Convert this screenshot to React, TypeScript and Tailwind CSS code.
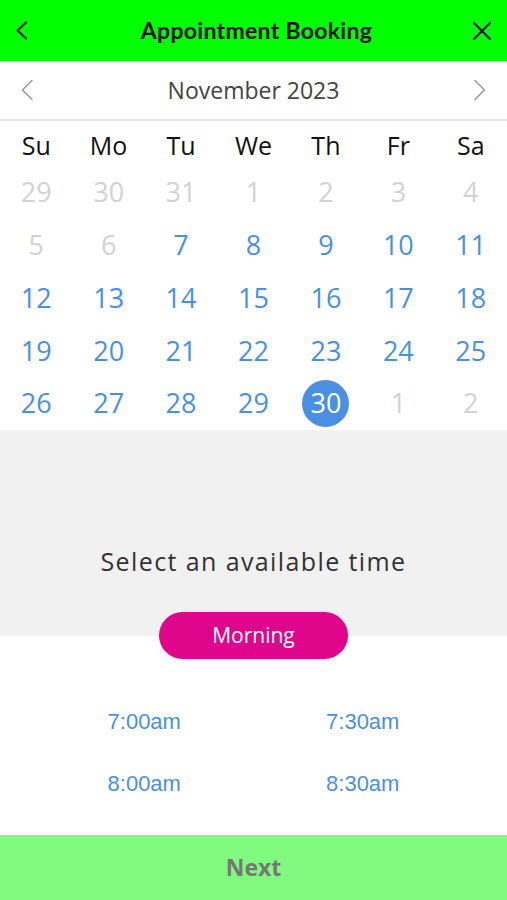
import React from "react";

const weekdays = ["Su", "Mo", "Tu", "We", "Th", "Fr", "Sa"];

const days: { n: number; muted?: boolean; selected?: boolean }[] = [
  { n: 29, muted: true },
  { n: 30, muted: true },
  { n: 31, muted: true },
  { n: 1, muted: true },
  { n: 2, muted: true },
  { n: 3, muted: true },
  { n: 4, muted: true },
  { n: 5, muted: true },
  { n: 6, muted: true },
  ...Array.from({ length: 23 }, (_, i) => ({ n: i + 7 })),
  { n: 30, selected: true },
  { n: 1, muted: true },
  { n: 2, muted: true },
];

const times = ["7:00am", "7:30am", "8:00am", "8:30am"];

export default function App() {
  return (
    <div className="flex h-screen flex-col bg-white font-['Open_Sans',sans-serif]">
      {/* Header */}
      <header className="flex h-[61px] items-center justify-between bg-[#00ff00] px-[15px]">
        <div className="flex w-[22px] justify-start">
          <svg width="13" height="19" viewBox="0 0 13 19" fill="none">
            <path d="M11 1.5 L2.5 9.5 L11 17.5" stroke="#111" strokeWidth="2" strokeLinecap="round" strokeLinejoin="round" />
          </svg>
        </div>
        <h1 className="pl-[6px] font-['Lato',sans-serif] text-[23px] font-bold tracking-[0.3px] text-[#111]">
          Appointment Booking
        </h1>
        <div className="flex w-[22px] justify-end">
          <svg width="20" height="20" viewBox="0 0 20 20" fill="none">
            <path d="M2 2 L18 18 M18 2 L2 18" stroke="#111" strokeWidth="2.2" strokeLinecap="round" />
          </svg>
        </div>
      </header>

      {/* Month */}
      <div className="flex h-[60px] items-center justify-between border-b-2 border-[#e8e8e8] px-[20px]">
        <svg width="14" height="22" viewBox="0 0 14 22" fill="none">
          <path d="M12 1.5 L2.5 11 L12 20.5" stroke="#9a9a9a" strokeWidth="1.6" strokeLinecap="round" strokeLinejoin="round" />
        </svg>
        <span className="text-[23px] text-[#444]">November 2023</span>
        <svg width="14" height="22" viewBox="0 0 14 22" fill="none">
          <path d="M2 1.5 L11.5 11 L2 20.5" stroke="#9a9a9a" strokeWidth="1.6" strokeLinecap="round" strokeLinejoin="round" />
        </svg>
      </div>

      {/* Calendar */}
      <div className="grid grid-cols-7">
        {weekdays.map((w) => (
          <div key={w} className="flex h-[45px] items-center justify-center pt-1 text-[25px] text-[#111]">
            {w}
          </div>
        ))}
        {days.map((d, i) => (
          <div key={i} className="flex h-[52.8px] items-center justify-center">
            {d.selected ? (
              <span className="flex h-[47px] w-[47px] items-center justify-center rounded-full bg-[#4a90e2] text-[27px] text-white">
                {d.n}
              </span>
            ) : (
              <span className={`text-[27px] ${d.muted ? "text-[#d2d2d2]" : "text-[#4a90e2]"}`}>{d.n}</span>
            )}
          </div>
        ))}
      </div>

      {/* Time selection */}
      <div className="flex h-[206px] items-end justify-center bg-[#f1f1f1] pb-[59px]">
        <p className="text-[25px] leading-[32px] tracking-[1.4px] text-[#333]">Select an available time</p>
      </div>
      <div className="-mt-[24px] flex justify-center">
        <button className="h-[47px] w-[189px] rounded-full bg-[#e0068b] text-[21px] text-white">Morning</button>
      </div>

      <div className="mt-[32px] grid grid-cols-2 px-[35px]">
        {times.map((t) => (
          <div key={t} className="flex h-[62px] items-center justify-center font-['Liberation_Sans',sans-serif] text-[22px] text-[#4a90e2]">
            {t}
          </div>
        ))}
      </div>

      {/* Footer */}
      <button className="mt-auto flex h-[65px] items-center justify-center bg-[#80fb80] text-[23px] font-bold text-[#777]">
        Next
      </button>
    </div>
  );
}
